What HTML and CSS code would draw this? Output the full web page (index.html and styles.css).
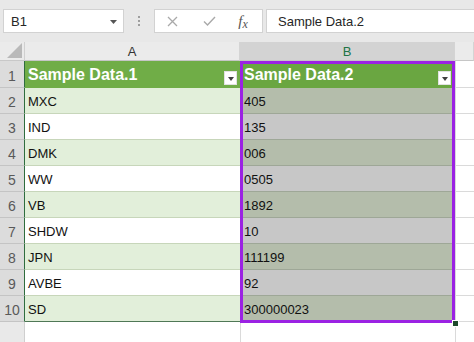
FILE: index.html
```html
<!DOCTYPE html>
<html>
<head>
<meta charset="utf-8">
<link rel="stylesheet" href="styles.css">
</head>
<body>
<div class="toolbar">
  <div class="namebox"><span>B1</span><svg class="nb-arrow" width="7" height="4" viewBox="0 0 7 4"><path d="M0 0H7L3.5 4Z" fill="#555"/></svg></div>
  <div class="grip"><i></i><i></i><i></i></div>
  <div class="fbtns">
    <span class="slot s1"><svg width="11" height="11" viewBox="0 0 11 11"><path d="M1 1L10 10M10 1L1 10" stroke="#a9a9a9" stroke-width="1.3" fill="none"/></svg></span>
    <span class="slot s2"><svg width="13" height="10" viewBox="0 0 13 10"><path d="M1 5.5L4.5 9L12 1" stroke="#a9a9a9" stroke-width="1.4" fill="none"/></svg></span>
    <span class="slot s3"><span class="fx">f<span class="fx-x">x</span></span></span>
  </div>
  <div class="finput">Sample Data.2</div>
</div>
<div class="sheet">
  <div class="corner"><svg width="15" height="15" viewBox="0 0 15 15"><path d="M15 0V15H0Z" fill="#b9b9b9"/></svg></div>
  <div class="ch">A</div>
  <div class="ch sel">B</div>
  <div class="ch">&nbsp;</div>

  <div class="rh">1</div>
  <div class="c a hdr"><span>Sample Data.1</span><span class="dd"><svg width="6" height="4" viewBox="0 0 6 4"><path d="M0 0H6L3 4Z" fill="#404040"/></svg></span></div>
  <div class="c b hdr"><span>Sample Data.2</span><span class="dd ddb"><svg width="6" height="4" viewBox="0 0 6 4"><path d="M0 0H6L3 4Z" fill="#404040"/></svg></span></div>
  <div class="c x"></div>

  <div class="rh">2</div><div class="c a g">MXC</div><div class="c b g">405</div><div class="c x"></div>
  <div class="rh">3</div><div class="c a w">IND</div><div class="c b w">135</div><div class="c x"></div>
  <div class="rh">4</div><div class="c a g">DMK</div><div class="c b g">006</div><div class="c x"></div>
  <div class="rh">5</div><div class="c a w">WW</div><div class="c b w">0505</div><div class="c x"></div>
  <div class="rh">6</div><div class="c a g">VB</div><div class="c b g">1892</div><div class="c x"></div>
  <div class="rh">7</div><div class="c a w">SHDW</div><div class="c b w">10</div><div class="c x"></div>
  <div class="rh">8</div><div class="c a g">JPN</div><div class="c b g">111199</div><div class="c x"></div>
  <div class="rh">9</div><div class="c a w">AVBE</div><div class="c b w">92</div><div class="c x"></div>
  <div class="rh">10</div><div class="c a g last">SD</div><div class="c b g">300000023</div><div class="c x"></div>

  <div class="rh empty"></div><div class="c e"></div><div class="c e eb"></div><div class="c e eb"></div>
</div>
<div class="selbox"></div>
<div class="fill"></div>
</body>
</html>
```

FILE: styles.css
```css
html, body {
  margin: 0;
  padding: 0;
}
body {
  width: 474px;
  height: 342px;
  overflow: hidden;
  position: relative;
  background: #fff;
  font-family: "Liberation Sans", Arial, sans-serif;
}

/* ---------- formula bar ---------- */
.toolbar {
  height: 42px;
  box-sizing: border-box;
  padding: 9px 0 0 3px;
  background: #e8e8e8;
  display: flex;
  align-items: flex-start;
}
.namebox {
  width: 121px;
  height: 24px;
  box-sizing: border-box;
  background: #fff;
  border: 1px solid #d2d2d2;
  display: flex;
  align-items: center;
  justify-content: space-between;
  padding: 0 6px 0 7px;
  font-size: 13px;
  color: #262626;
}
.nb-arrow {
  margin-top: 1px;
}
.grip {
  width: 30px;
  height: 24px;
  display: flex;
  flex-direction: column;
  align-items: center;
  justify-content: center;
  gap: 2px;
}
.grip i {
  display: block;
  width: 2px;
  height: 2px;
  background: #9e9e9e;
}
.fbtns {
  width: 109px;
  height: 24px;
  box-sizing: border-box;
  background: #fff;
  border: 1px solid #d2d2d2;
  display: flex;
  align-items: center;
}
.slot {
  display: flex;
  align-items: center;
  justify-content: center;
  height: 22px;
}
.s1 { width: 35px; }
.s2 { width: 38px; }
.s3 { width: 30px; }
.fx {
  font-family: "Liberation Serif", "DejaVu Serif", serif;
  font-style: italic;
  font-size: 15px;
  color: #555;
  line-height: 1;
}
.fx-x {
  font-size: 12px;
  position: relative;
  top: 2px;
}
.finput {
  flex: 1;
  height: 24px;
  box-sizing: border-box;
  margin-left: 3px;
  margin-right: -3px;
  background: #fff;
  border: 1px solid #d2d2d2;
  display: flex;
  align-items: center;
  padding-left: 11px;
  font-size: 13px;
  color: #262626;
}

/* ---------- sheet grid ---------- */
.sheet {
  display: grid;
  grid-template-columns: 25px 215px 215px 19px;
  grid-template-rows: 19px 27px repeat(9, 26px) 20px;
}
.sheet > div {
  box-sizing: border-box;
}
.corner {
  background: #ebebeb;
  border-right: 1px solid #d0d0d0;
  border-bottom: 1px solid #c8c8c8;
  display: flex;
  align-items: flex-end;
  justify-content: flex-end;
  padding: 0 2px 2px 0;
}
.ch {
  background: #ebebeb;
  border-bottom: 1px solid #c6c6c6;
  border-right: 1px solid #d4d4d4;
  display: flex;
  align-items: center;
  justify-content: center;
  font-size: 13px;
  color: #333;
  padding-top: 1px;
}
.ch.sel {
  background: #d3d3d3;
  color: #217346;
}
.rh {
  background: #dcdcdc;
  border-right: 1px solid #2f6d3e;
  border-bottom: 1px solid #c4c4c4;
  display: flex;
  align-items: flex-end;
  justify-content: center;
  font-size: 14px;
  color: #595959;
  padding-bottom: 3px;
  line-height: 16px;
}
.rh.empty {
  background: #e9e9e9;
  border-right: 1px solid #cfcfcf;
  border-bottom: none;
}
.c {
  display: flex;
  align-items: flex-end;
  font-size: 13px;
  line-height: 15px;
  color: #111;
  padding-bottom: 4px;
  white-space: nowrap;
}
.a {
  padding-left: 3px;
  border-bottom: 1px solid #c7d6ba;
}
.b {
  padding-left: 4px;
  border-bottom: 1px solid #9ea797;
}
.a.g { background: #e2efda; }
.a.w { background: #fff; }
.b.g { background: #b4bdab; }
.b.w { background: #c7c7c7; }
.a.last { border-bottom-color: #4f7856; }

.hdr {
  background: #70ad47;
  color: #fff;
  font-weight: bold;
  font-size: 16px;
  line-height: 18px;
  justify-content: space-between;
  padding-bottom: 3px;
  border-bottom: 1px solid #70ad47;
}
.b.hdr {
  background: #6aa641;
  border-bottom-color: #6aa641;
}
.dd {
  width: 13px;
  height: 14px;
  background: #fff;
  border: 1px solid #e2e2e2;
  box-sizing: border-box;
  display: flex;
  align-items: center;
  justify-content: center;
  padding-top: 2px;
  margin-right: 3px;
  align-self: flex-end;
  margin-bottom: -1px;
}
.ddb {
  margin-right: 4px;
}
.x {
  background: #fff;
  border-bottom: 1px solid #dadada;
  border-left: 1px solid #dadada;
}
.e {
  background: #fff;
}
.eb {
  border-left: 1px solid #dadada;
}

/* ---------- selection overlay ---------- */
.selbox {
  position: absolute;
  left: 240px;
  top: 61px;
  width: 215px;
  height: 262px;
  box-sizing: border-box;
  border: 3px solid #9b22e3;
}
.fill {
  position: absolute;
  left: 453px;
  top: 321px;
  width: 5px;
  height: 5px;
  background: #1f4a2c;
  outline: 1px solid #fff;
}
```
